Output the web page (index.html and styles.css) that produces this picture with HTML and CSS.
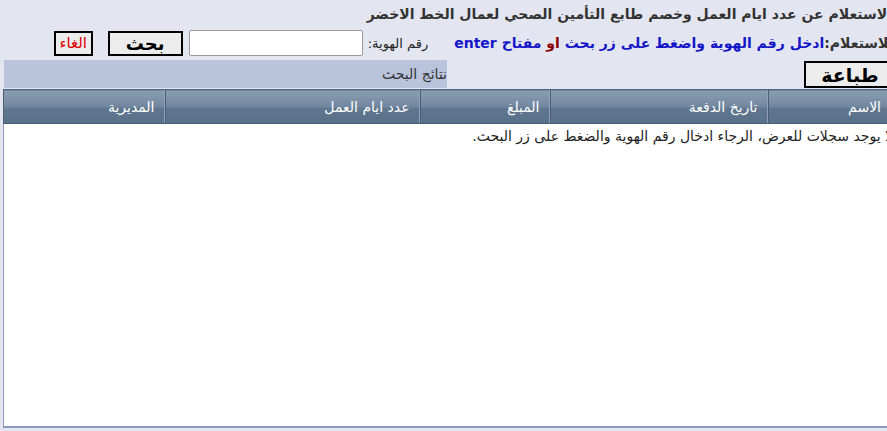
FILE: index.html
```html
<!DOCTYPE html>
<html lang="ar">
<head>
    <meta charset="UTF-8">
    <title>استعلام ايام العمل</title>
    <link rel="stylesheet" href="styles.css">
</head>
<body>
<div class="page">
  <div class="inner" dir="rtl">
    <div class="title">الاستعلام عن عدد ايام العمل وخصم طابع التأمين الصحي لعمال الخط الاخضر</div>

    <div class="search-row">
        <span class="hint"><span class="dark">للاستعلام:</span>ادخل رقم الهوية واضغط على زر بحث <span class="or">او</span> مفتاح enter</span>
        <label for="hawiya" class="lbl">رقم الهوية:</label>
        <input type="text" id="hawiya" class="idbox">
        <button class="btn btn-search">بحث</button>
        <button class="btn btn-cancel">الغاء</button>
    </div>

    <div class="results-row">
        <button class="btn btn-print">طباعة</button>
        <div class="results-band">نتائج البحث</div>
    </div>

    <div class="grid">
        <table class="grid-head">
            <tr>
                <th class="c1">الاسم</th>
                <th class="c2">تاريخ الدفعة</th>
                <th class="c3">المبلغ</th>
                <th class="c4">عدد ايام العمل</th>
                <th class="c5">المديرية</th>
            </tr>
        </table>
        <div class="grid-body">
            <div class="empty">لا يوجد سجلات للعرض، الرجاء ادخال رقم الهوية والضغط على زر البحث.</div>
        </div>
    </div>
  </div>
</div>
</body>
</html>
```

FILE: styles.css
```css
html, body {
    margin: 0;
    padding: 0;
    background-color: #e3e6f0;
}
.page {
    width: 100%;
    height: 431px;
    overflow: hidden;
}
.inner {
    width: 896px;
    font-family: "DejaVu Sans", sans-serif;
    font-size: 14px;
    color: #333;
}
.title {
    font-weight: bold;
    font-size: 14px;
    padding: 6px 4px 0 0;
    height: 22px;
}
.search-row {
    display: flex;
    align-items: center;
    height: 30px;
    padding-right: 2px;
}
.hint {
    font-weight: bold;
    color: #1515c8;
    font-size: 14px;
}
.dark {
    color: #333;
}
.or {
    color: #8b0000;
}
.lbl {
    margin-right: 26px;
    margin-left: 5px;
    font-size: 13px;
    color: #222;
}
.idbox {
    width: 174px;
    height: 26px;
    box-sizing: border-box;
    padding: 0;
    border: 1px solid #9a9a9a;
    border-radius: 2px;
    background: #fff;
}
.btn {
    font-family: "DejaVu Sans", sans-serif;
    background-color: #ececec;
    border: 2px solid #000;
    padding: 0;
    height: 25px;
}
.btn-search {
    width: 75px;
    margin-right: 6px;
    font-size: 18px;
    font-weight: bold;
}
.btn-cancel {
    width: 39px;
    margin-right: 15px;
    font-size: 15px;
    color: #e00000;
}
.results-row {
    display: flex;
    justify-content: space-between;
    align-items: flex-end;
    margin-top: 2px;
}
.btn-print {
    width: 92px;
    height: 27px;
    font-size: 19px;
    font-weight: bold;
}
.results-band {
    width: 443px;
    height: 28px;
    line-height: 28px;
    margin-left: 4px;
    background-color: #b9c4dc;
    color: #333;
}
.grid {
    margin: 1px 0 0 3px;
}
.grid-head {
    width: 100%;
    border-collapse: collapse;
    table-layout: fixed;
}
.grid-head th {
    box-sizing: border-box;
    height: 34px;
    padding: 0 10px;
    text-align: right;
    font-weight: normal;
    color: #fff;
    font-size: 14px;
    background: linear-gradient(#8a9db3, #71879f 50%, #60778f 51%, #587089);
    border-top: 1px solid #4f6580;
    border-bottom: 1px solid #4a5e76;
    border-left: 1px solid #4a5e76;
    box-shadow: inset -1px 0 0 #8fa1b6;
}
.grid-head th.c1 { width: 128px; padding-right: 15px; }
.c2 { width: 218px; }
.c3 { width: 130px; }
.c4 { width: 255px; }
.c5 { width: 162px; }
.grid-body {
    height: 302px;
    background: #fff;
    border-left: 1px solid #8d9bba;
    border-bottom: 2px solid #8d9bba;
}
.empty {
    padding: 4px 3px 0 0;
    color: #222;
}
```
